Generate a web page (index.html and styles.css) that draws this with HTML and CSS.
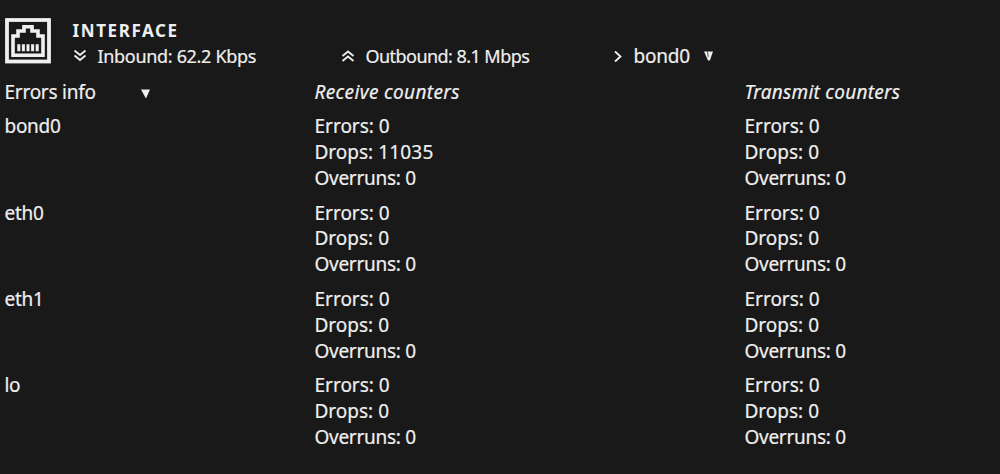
FILE: index.html
```html
<!DOCTYPE html>
<html lang="en">

<head>
  <meta charset="UTF-8">
  <title>Interface</title>
  <link rel="stylesheet" href="styles.css">
</head>

<body>

  <div class="header">
    <svg class="port" viewBox="0 0 46 46" fill="none" stroke="#efefef" stroke-width="3.8">
      <rect x="2" y="2" width="42" height="41.5" />
      <path d="M8 37.3V18H13V13H19V8.8H27V13H33V18H38V37.3Z" stroke-width="3.6" />
      <path d="M13.8 26.3V33.3M18.4 26.3V33.3M23 26.3V33.3M27.6 26.3V33.3M32.2 26.3V33.3" stroke-width="3" />
    </svg>
    <div class="info">
      <h3 class="title">INTERFACE</h3>
      <div class="stats">
        <div class="stat">
          <svg class="arrows" viewBox="0 0 14 14"><path d="M1.5 1.5L7 6L12.5 1.5M1.5 6.5L7 11L12.5 6.5" /></svg>
          <span class="inbound">Inbound: 62.2 Kbps</span>
        </div>
        <div class="stat">
          <svg class="arrows" viewBox="0 0 14 14"><path d="M1.5 7L7 2.5L12.5 7M1.5 12L7 7.5L12.5 12" /></svg>
          <span class="outbound">Outbound: 8.1 Mbps</span>
        </div>
        <div class="picker">
          <svg class="chevron" viewBox="0 0 10 14"><path d="M2 2.5L7.5 7.5L2 12.5" /></svg>
          <span class="port-name">bond0</span>
          <svg class="caret split" viewBox="0 0 10 10"><path d="M0 0H10L6.5 10H4.5Z" /><path class="gap" d="M3.8 0L4.8 6" /></svg>
        </div>
      </div>
    </div>
  </div>

  <table class="counters">
    <tr>
      <td class="name"><span class="label">Errors info</span><svg class="caret" viewBox="0 0 10 10"><path d="M0 0H10L5.5 10Z" /></svg></td>
      <td class="rx"><i class="receive">Receive counters</i></td>
      <td><i class="transmit">Transmit counters</i></td>
    </tr>
    <tr>
      <td class="device">bond0</td>
      <td>Errors: 0<br>Drops: <span class="num">11035</span><br><span class="overruns">Overruns: 0</span></td>
      <td>Errors: 0<br>Drops: 0<br><span class="overruns">Overruns: 0</span></td>
    </tr>
    <tr>
      <td class="device">eth0</td>
      <td>Errors: 0<br>Drops: 0<br><span class="overruns">Overruns: 0</span></td>
      <td>Errors: 0<br>Drops: 0<br><span class="overruns">Overruns: 0</span></td>
    </tr>
    <tr>
      <td class="device">eth1</td>
      <td>Errors: 0<br>Drops: 0<br><span class="overruns">Overruns: 0</span></td>
      <td>Errors: 0<br>Drops: 0<br><span class="overruns">Overruns: 0</span></td>
    </tr>
    <tr>
      <td class="device">lo</td>
      <td>Errors: 0<br>Drops: 0<br><span class="overruns">Overruns: 0</span></td>
      <td>Errors: 0<br>Drops: 0<br><span class="overruns">Overruns: 0</span></td>
    </tr>
  </table>

</body>

</html>
```

FILE: styles.css
```css
* {
  margin: 0;
  padding: 0;
  box-sizing: border-box;
}

body {
  height: 474px;
  overflow: hidden;
  background: #191919;
  color: #efefef;
  font-family: "Noto Sans", sans-serif;
  font-size: 19px;
  line-height: 25.8px;
  -webkit-text-stroke: 0.2px #efefef;
}

.header {
  display: flex;
  height: 75px;
  padding: 18px 0 0 5px;
}

.port {
  width: 46px;
  height: 46px;
  margin-right: 21.5px;
}

.title {
  font-size: 17px;
  line-height: 25px;
  letter-spacing: 1.6px;
  -webkit-text-stroke: 0;
}

.stats {
  display: grid;
  grid-template-columns: 268px 272px auto;
  font-size: 18px;
  line-height: 26px;
}

.stat,
.picker {
  display: flex;
  align-items: center;
}

.arrows {
  width: 14px;
  height: 14px;
  margin-right: 11px;
}

.inbound {
  letter-spacing: -0.32px;
}

.outbound {
  letter-spacing: -0.55px;
}

.arrows path,
.chevron path {
  fill: none;
  stroke: #efefef;
  stroke-width: 1.8;
}

.chevron {
  width: 10px;
  height: 14px;
  margin-right: 11px;
}

.picker {
  font-size: 19px;
}

.port-name {
  letter-spacing: -0.2px;
}

.caret {
  width: 9px;
  height: 10px;
  fill: #efefef;
}

.caret .gap {
  stroke: #191919;
  stroke-width: 0.8;
}

.split {
  margin-left: 14px;
}

.counters {
  width: 1000px;
  table-layout: fixed;
  border-collapse: collapse;
}

.counters td {
  padding: 4.5px;
  vertical-align: top;
}

.counters .name {
  width: 310px;
}

.counters .rx {
  width: 430px;
}

.label {
  display: inline-block;
  width: 136px;
  letter-spacing: -0.25px;
}

.receive {
  letter-spacing: 0.36px;
}

.transmit {
  letter-spacing: 0.26px;
}

.device {
  letter-spacing: -0.3px;
}

.overruns {
  letter-spacing: -0.28px;
}

.num {
  letter-spacing: 0.2px;
}
```
